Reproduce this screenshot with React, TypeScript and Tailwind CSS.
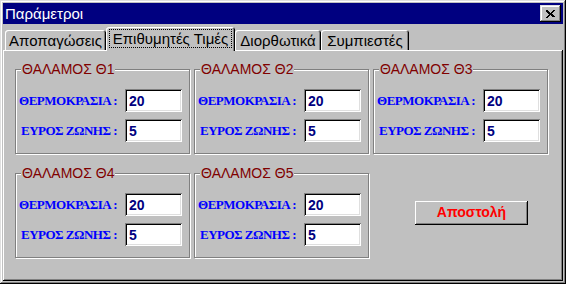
import { useState } from 'react';

const raised = 'shadow-[inset_-1px_-1px_#000,inset_1px_1px_#dfdfdf,inset_-2px_-2px_#808080,inset_2px_2px_#fff]';

const TABS = [
  { key: 'defrost', label: 'Αποπαγώσεις', w: 'w-[101px]' },
  { key: 'setpoints', label: 'Επιθυμητές Τιμές', w: 'w-[129px]' },
  { key: 'correct', label: 'Διορθωτικά', w: 'w-[86px]' },
  { key: 'comp', label: 'Συμπιεστές', w: 'w-[88px]' },
];

const ROOMS = [
  { name: 'ΘΑΛΑΜΟΣ Θ1', temp: '20', band: '5' },
  { name: 'ΘΑΛΑΜΟΣ Θ2', temp: '20', band: '5' },
  { name: 'ΘΑΛΑΜΟΣ Θ3', temp: '20', band: '5' },
  { name: 'ΘΑΛΑΜΟΣ Θ4', temp: '20', band: '5' },
  { name: 'ΘΑΛΑΜΟΣ Θ5', temp: '20', band: '5' },
];

function Field({ label, value }: { label: string; value: string }) {
  return (
    <div className="flex items-center justify-end gap-[8px]">
      <span className="font-['Liberation_Serif',serif] font-bold text-[13px] tracking-[-0.5px] leading-none text-[#0000ff] whitespace-pre">{label}</span>
      <input
        defaultValue={value}
        className="w-[57px] h-[23px] bg-white pl-[4px] font-bold text-[14px] text-[#000080] outline-none shadow-[inset_1px_1px_#808080,inset_-1px_-1px_#fff,inset_2px_2px_#000,inset_-2px_-2px_#dfdfdf]"
      />
    </div>
  );
}

function Room({ name, temp, band }: { name: string; temp: string; band: string }) {
  return (
    <div className="relative w-[175px] h-[85px] border border-[#808080] shadow-[1px_1px_0_#fff,inset_1px_1px_0_#fff] pt-[19px] pr-[7px] flex flex-col gap-[7px]">
      <span className="absolute left-[5px] top-[-9px] px-[1px] bg-[#c0c0c0] text-[14px] leading-[16px] text-[#800000]">{name}</span>
      <Field label="ΘΕΡΜΟΚΡΑΣΙΑ :" value={temp} />
      <Field label="ΕΥΡΟΣ ΖΩΝΗΣ :" value={band} />
    </div>
  );
}

export default function App() {
  const [tab, setTab] = useState('setpoints');

  return (
    <div className={`w-[566px] h-[284px] bg-[#c0c0c0] p-[3px] flex flex-col font-['Liberation_Sans',Arial,sans-serif] ${raised}`}>
      <div className="h-[21px] bg-[#000080] flex items-center pl-[2px] pr-[2px]">
        <span className="text-white text-[15px] leading-none">Παράμετροι</span>
        <button className={`ml-auto w-[21px] h-[17px] bg-[#c0c0c0] flex items-center justify-center ${raised}`}>
          <svg width="9" height="8" viewBox="0 0 9 8" shapeRendering="crispEdges">
            <path d="M0 0h2v1h1v1h1v1h1V2h1V1h1V0h2v1H8v1H7v1H6v1h1v1h1v1h1v1H7V7H6V6H5V5H4v1H3v1H2v1H0V7h1V6h1V5h1V4H2V3H1V2H0z" fill="#000" />
          </svg>
        </button>
      </div>

      <div className="h-[26px] flex items-end pl-[2px]">
        {TABS.map(t => {
          const active = t.key === tab;
          return (
            <button
              key={t.key}
              onClick={() => setTab(t.key)}
              className={`${t.w} flex items-center justify-center bg-[#c0c0c0] rounded-t-[3px] text-[15px] leading-none text-black shadow-[inset_1px_1px_#fff,inset_-1px_0_#000,inset_-2px_0_#808080] ${
                active ? 'relative z-10 h-[24px] -mb-[1px] pb-[2px]' : 'h-[20px]'
              }`}
            >
              {active ? (
                <span className="border border-dotted border-black px-[3px] py-[1px]">{t.label}</span>
              ) : (
                t.label
              )}
            </button>
          );
        })}
      </div>

      <div className="flex-1 shadow-[inset_-1px_-1px_#000,inset_1px_1px_#fff,inset_-2px_-2px_#808080] pl-[12px] pt-[19px] flex flex-col gap-[19px]">
        <div className="flex gap-[4px]">
          {ROOMS.slice(0, 3).map(r => <Room key={r.name} {...r} />)}
        </div>
        <div className="flex gap-[4px]">
          {ROOMS.slice(3).map(r => <Room key={r.name} {...r} />)}
          <div className="pl-[42px] pt-[27px]">
            <button className="w-[113px] h-[24px] bg-[#c0c0c0] text-[14px] font-bold text-[#ff0000] shadow-[inset_-1px_-1px_#000,inset_1px_1px_#fff,inset_-2px_-2px_#808080]">
              Αποστολή
            </button>
          </div>
        </div>
      </div>
    </div>
  );
}
